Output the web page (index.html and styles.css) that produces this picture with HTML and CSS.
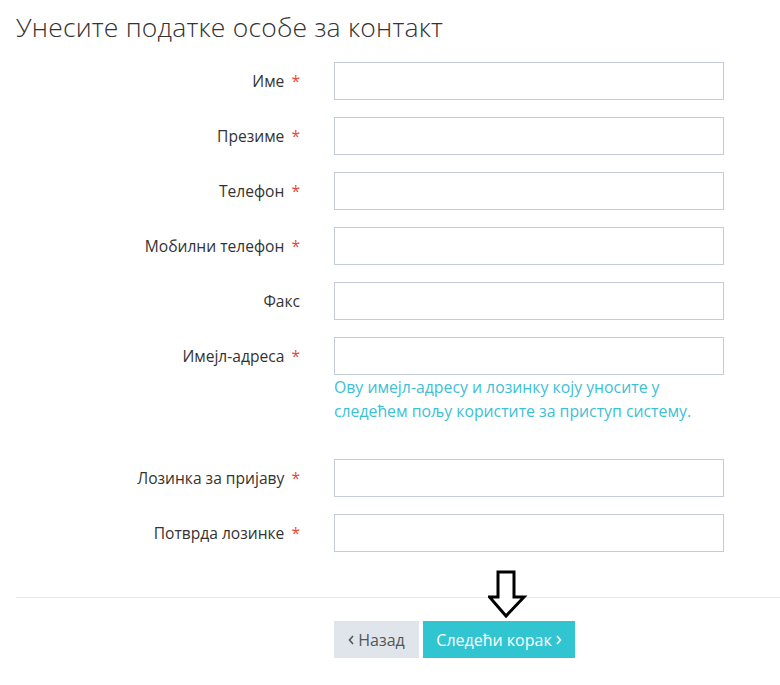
FILE: index.html
```html
<!DOCTYPE html>
<html lang="sr">
<head>
  <meta charset="UTF-8">
  <title>Контакт особа</title>
  <link rel="stylesheet" href="styles.css">
</head>
<body>

  <div class="page">
    <h1>Унесите податке особе за контакт</h1>

    <form class="form">
      <label class="lbl">Име <span class="req">*</span></label>
      <div class="field"><input type="text"></div>

      <label class="lbl">Презиме <span class="req">*</span></label>
      <div class="field"><input type="text"></div>

      <label class="lbl">Телефон <span class="req">*</span></label>
      <div class="field"><input type="text"></div>

      <label class="lbl">Мобилни телефон <span class="req">*</span></label>
      <div class="field"><input type="text"></div>

      <label class="lbl">Факс</label>
      <div class="field"><input type="text"></div>

      <label class="lbl">Имејл-адреса <span class="req">*</span></label>
      <div class="field">
        <input type="text">
        <p class="help">Ову имејл-адресу и лозинку коју уносите у следећем пољу користите за приступ систему.</p>
      </div>

      <label class="lbl">Лозинка за пријаву <span class="req">*</span></label>
      <div class="field"><input type="password"></div>

      <label class="lbl">Потврда лозинке <span class="req">*</span></label>
      <div class="field"><input type="password"></div>
    </form>

    <div class="actions">
      <button class="btn back">
        <svg class="chev" width="6" height="10" viewBox="0 0 6 10"><path d="M5 1 L1.5 5 L5 9" fill="none" stroke="currentColor" stroke-width="1.6"/></svg>
        Назад
      </button>
      <button class="btn next">
        Следећи корак
        <svg class="chev" width="6" height="10" viewBox="0 0 6 10"><path d="M1 1 L4.5 5 L1 9" fill="none" stroke="currentColor" stroke-width="1.6"/></svg>
      </button>
      <svg class="arrow" width="40" height="50" viewBox="0 0 40 50">
        <path d="M10 2 H26 V27 H36 L18 46 L1.5 27 H10 Z" fill="#fff" stroke="#000" stroke-width="3" stroke-linejoin="miter"/>
      </svg>
    </div>
  </div>

</body>
</html>
```

FILE: styles.css
```css
body { margin: 0; background: #fff; font-family: "Open Sans", "Noto Sans", sans-serif; color: #333; }
.page { padding: 9px 0 0 16px; }
h1 { margin: 0 0 17px 0; font-size: 26.5px; font-weight: 300; line-height: 36px; color: #333; letter-spacing: 0.2px; }

.form { display: grid; grid-template-columns: 284px 390px; column-gap: 34px; row-gap: 17px; align-items: start; }
.lbl { font-size: 15.6px; text-align: right; line-height: 38px; color: #333; }
.req { color: #e5493a; margin-left: 3px; }
.field input { display: block; box-sizing: border-box; width: 390px; height: 38px; border: 1px solid #c3ccd8; margin: 0; padding: 6px 10px; font: inherit; outline: none; }
.help { margin: 0 0 19px 0; font-size: 15.8px; line-height: 24px; color: #3dbfd4; }

.actions { position: relative; border-top: 1px solid #e8e8e8; margin-top: 45px; padding: 23px 0 0 318px; display: flex; gap: 4px; }
.btn { border: none; height: 37px; font: inherit; font-size: 16px; padding: 0; cursor: pointer; display: flex; align-items: center; justify-content: center; gap: 4px; }
.back { background: #e0e5ec; color: #555; width: 85px; }
.next { background: #31c5d2; color: #fff; width: 152px; }
.chev { display: block; margin-top: 1px; }
.arrow { position: absolute; left: 472px; top: -28px; }
```
